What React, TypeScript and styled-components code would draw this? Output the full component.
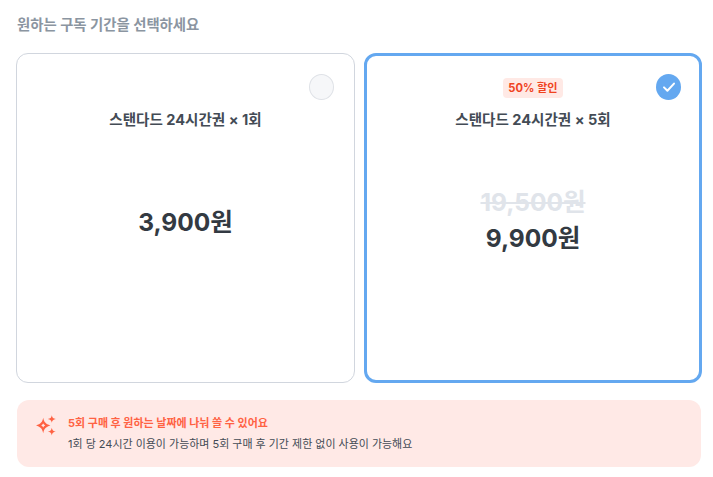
import React from "react";
import styled, { createGlobalStyle } from "styled-components";

const Global = createGlobalStyle`
  html, body { margin: 0; padding: 0; background: #fff; }
  body { font-family: Inter, "Noto Sans CJK KR", sans-serif; }
  * { box-sizing: border-box; }
`;

const Page = styled.div`
  width: 713px;
  height: 477px;
  padding: 14px 12px 0 16px;
  display: flex;
  flex-direction: column;
  overflow: hidden;
`;

const Heading = styled.h2`
  margin: 0 0 18px 1px;
  height: 21px;
  font-size: 14.4px;
  line-height: 21px;
  font-weight: 700;
  color: #8b95a1;
`;

const Plans = styled.div`
  display: grid;
  grid-template-columns: 339px 338px;
  gap: 9px;
`;

const Plan = styled.div<{ $selected?: boolean }>`
  position: relative;
  height: 330px;
  border-radius: 12px;
  border: ${(p) => (p.$selected ? "3px solid #64a8f0" : "1px solid #d1d6de")};
  padding-top: ${(p) => (p.$selected ? "22px" : "24px")};
  display: flex;
  flex-direction: column;
  align-items: center;
`;

const Badge = styled.div<{ $hidden?: boolean }>`
  height: 20px;
  padding: 0 5px;
  border-radius: 4px;
  background: ${(p) => (p.$hidden ? "transparent" : "#ffe9e5")};
  color: #f0441f;
  font-size: 11.2px;
  line-height: 20px;
  font-weight: 700;
`;

const PlanTitle = styled.div`
  margin-top: 12px;
  height: 21px;
  font-size: 14.55px;
  line-height: 21px;
  font-weight: 700;
  color: #434b55;
`;

const PriceArea = styled.div`
  height: 182px;
  display: flex;
  flex-direction: column;
  align-items: center;
  justify-content: center;
`;

const OldPrice = styled.div`
  height: 28px;
  margin-bottom: 4px;
  font-size: 24.5px;
  line-height: 28px;
  font-weight: 700;
  color: #e0e4ea;
  text-decoration: line-through;
`;

const Price = styled.div`
  height: 36px;
  font-size: 24.5px;
  line-height: 36px;
  font-weight: 700;
  color: #333a42;
`;

const Radio = styled.div<{ $checked?: boolean }>`
  position: absolute;
  top: ${(p) => (p.$checked ? "18px" : "20px")};
  right: ${(p) => (p.$checked ? "18px" : "20px")};
  width: 25px;
  height: 26px;
  border-radius: 50%;
  background: ${(p) => (p.$checked ? "#64a8f0" : "#f6f7f9")};
  border: ${(p) => (p.$checked ? "none" : "1px solid #dfe2e7")};
  display: flex;
  align-items: center;
  justify-content: center;
`;

const Notice = styled.div`
  margin: 17px 0 0 1px;
  height: 67px;
  width: 684px;
  border-radius: 12px;
  background: #ffe9e6;
  padding: 14px 18px 13px;
  display: flex;
  gap: 11px;
`;

const Spark = styled.svg`
  flex: none;
  width: 22px;
  height: 22px;
  margin-top: 1px;
`;

const NoticeText = styled.div`
  display: flex;
  flex-direction: column;
  gap: 3px;
`;

const NoticeTitle = styled.div`
  height: 18px;
  font-size: 11px;
  line-height: 18px;
  font-weight: 700;
  color: #ff6243;
`;

const NoticeBody = styled.div`
  height: 18px;
  font-size: 10.97px;
  line-height: 18px;
  font-weight: 400;
  color: #434b55;
`;

export default function App() {
  return (
    <Page>
      <Global />
      <Heading>원하는 구독 기간을 선택하세요</Heading>
      <Plans>
        <Plan>
          <Radio />
          <Badge $hidden />
          <PlanTitle>스탠다드 24시간권 × 1회</PlanTitle>
          <PriceArea>
            <Price>3,900원</Price>
          </PriceArea>
        </Plan>
        <Plan $selected>
          <Radio $checked>
            <svg width="14" height="14" viewBox="0 0 14 14" fill="none">
              <path d="M2 7.4 5.4 10.8 12 3.6" stroke="#fff" strokeWidth="2" strokeLinecap="round" strokeLinejoin="round" />
            </svg>
          </Radio>
          <Badge>50% 할인</Badge>
          <PlanTitle>스탠다드 24시간권 × 5회</PlanTitle>
          <PriceArea>
            <OldPrice>19,500원</OldPrice>
            <Price>9,900원</Price>
          </PriceArea>
        </Plan>
      </Plans>
      <Notice>
        <Spark viewBox="0 0 22 22" fill="#ff6243">
          <path d="M8.2 2.8C9 7 10.6 9 15.4 10.5 10.6 12 9 14 8.2 18.2 7.4 14 5.8 12 1 10.5 5.8 9 7.4 7 8.2 2.8ZM8.2 8.6C7.8 9.4 7.2 10 6.2 10.5 7.2 11 7.8 11.6 8.2 12.4 8.6 11.6 9.2 11 10.2 10.5 9.2 10 8.6 9.4 8.2 8.6Z" fillRule="evenodd" />
          <path d="M16.8 0.2C17.2 2.6 18.2 3.6 20.8 4 18.2 4.4 17.2 5.4 16.8 7.8 16.4 5.4 15.4 4.4 12.8 4 15.4 3.6 16.4 2.6 16.8 0.2Z" />
          <path d="M16.8 12.8C17.2 15.2 18.2 16.2 20.8 16.6 18.2 17 17.2 18 16.8 20.4 16.4 18 15.4 17 12.8 16.6 15.4 16.2 16.4 15.2 16.8 12.8Z" />
        </Spark>
        <NoticeText>
          <NoticeTitle>5회 구매 후 원하는 날짜에 나눠 쓸 수 있어요</NoticeTitle>
          <NoticeBody>1회 당 24시간 이용이 가능하며 5회 구매 후 기간 제한 없이 사용이 가능해요</NoticeBody>
        </NoticeText>
      </Notice>
    </Page>
  );
}
